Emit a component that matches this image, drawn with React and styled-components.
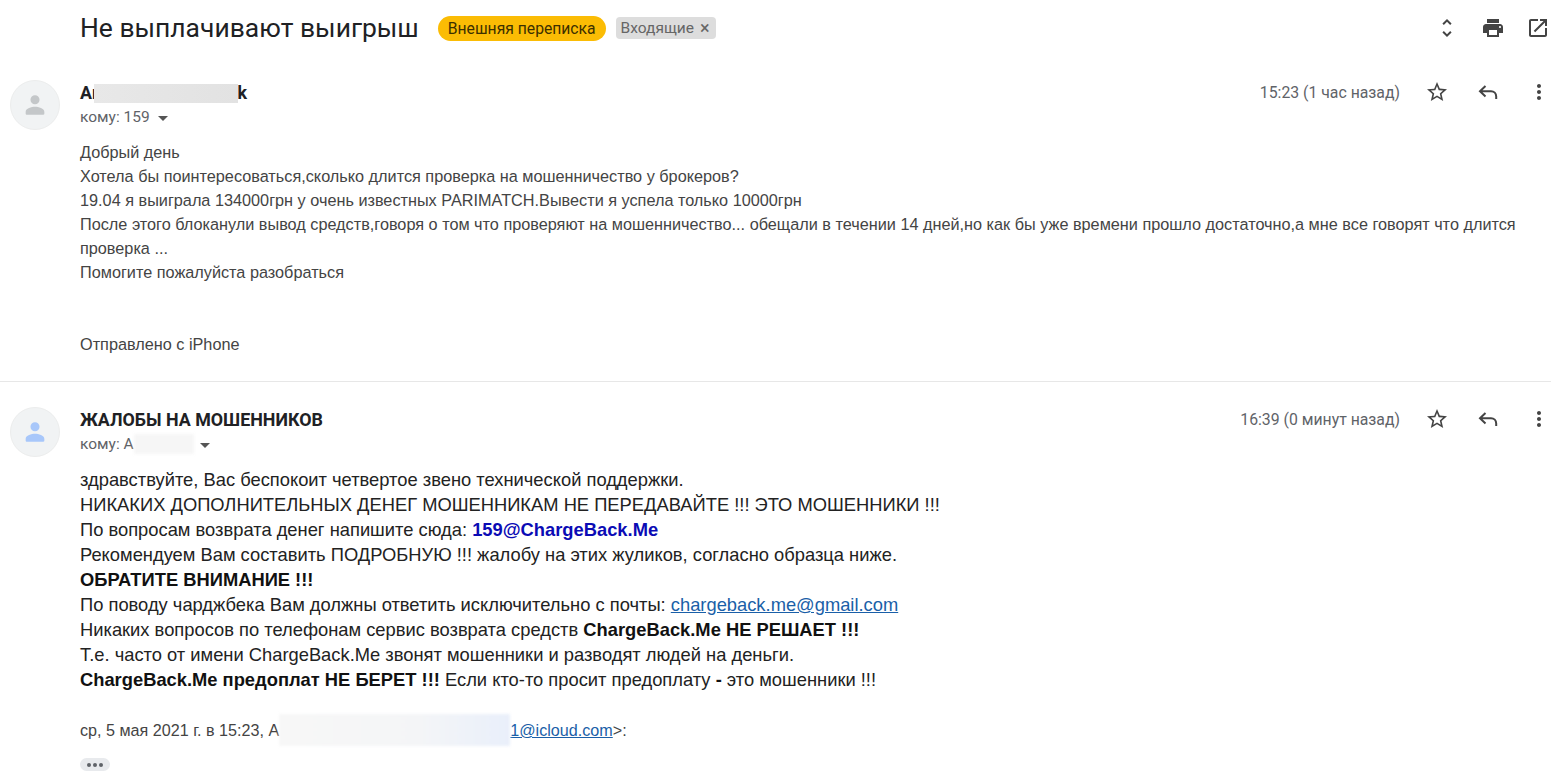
import React from 'react';
import styled, { createGlobalStyle } from 'styled-components';

const GlobalStyle = createGlobalStyle`
  html, body {
    margin: 0;
    background: #fff;
    overflow: hidden;
  }
`;

const Page = styled.div`
  width: 1568px;
  height: 775px;
  overflow: hidden;
  font-family: "Liberation Sans", Arial, sans-serif;
  color: #222;
`;

const SubjectBar = styled.div`
  height: 56px;
  display: flex;
  align-items: center;
  padding: 0 18px 0 80px;
`;

const Subject = styled.h1`
  margin: 0 19px 0 0;
  font: 400 26.45px/32px Roboto, sans-serif;
  color: #202124;
`;

const OrangeLabel = styled.span`
  height: 25px;
  display: flex;
  align-items: center;
  padding: 0 10px;
  margin-right: 10px;
  border-radius: 13px;
  background: #fbbc04;
  color: #3c3000;
  font: 400 15.7px Roboto, sans-serif;
`;

const GreyLabel = styled.span`
  height: 22px;
  display: flex;
  align-items: center;
  gap: 6px;
  padding: 0 6px 0 5px;
  border-radius: 4px;
  background: #dddddd;
  color: #666;
  font: 400 15.5px Roboto, sans-serif;
`;

const Close = styled.span`
  font-size: 18px;
  line-height: 18px;
`;

const ToolIcons = styled.div`
  margin-left: auto;
  display: flex;
  align-items: center;
  gap: 21.5px;
  color: #444;
`;

const Message = styled.div`
  padding: ${p => p.$top}px 17px 0 10px;
  display: grid;
  grid-template-columns: 50px 1fr;
  column-gap: 20px;
`;

const Avatar = styled.div`
  width: 50px;
  height: 50px;
  border-radius: 50%;
  background: #f1f3f4;
  border: 1px solid #eceded;
  box-sizing: border-box;
  display: flex;
  align-items: center;
  justify-content: center;
  color: ${p => p.$color};
`;

const HeadRow = styled.div`
  display: flex;
  align-items: flex-start;
  justify-content: space-between;
`;

const Sender = styled.div`
  font: 700 17.85px/24px Roboto, sans-serif;
  color: #202124;
  display: flex;
  align-items: center;
  margin-top: 1px;
`;

const To = styled.div`
  font: 400 15.5px/24px Roboto, sans-serif;
  color: #5f6368;
  display: flex;
  align-items: center;
`;

const Caret = styled.i`
  width: 0;
  height: 0;
  margin-left: ${p => p.$gap}px;
  margin-top: 2px;
  border-left: 5px solid transparent;
  border-right: 5px solid transparent;
  border-top: 5px solid #555;
`;

const Meta = styled.div`
  display: flex;
  align-items: center;
  color: #444;
  height: 24px;
`;

const Time = styled.span`
  font: 400 15.8px Roboto, sans-serif;
  color: #5f6368;
  margin-right: 25px;
`;

const MetaIcons = styled.div`
  display: flex;
  align-items: center;
  gap: 27px;
`;

const Redact = styled.span`
  display: inline-block;
  flex: none;
  width: ${p => p.$w}px;
  height: ${p => p.$h}px;
  margin-left: ${p => p.$left || 0}px;
  vertical-align: middle;
  background: ${p => p.$bg};
  filter: blur(${p => p.$blur || 1.5}px);
`;

const Body = styled.div`
  font-size: ${p => p.$size}px;
  line-height: ${p => p.$line}px;
  color: ${p => p.$color};
`;

const FirstBody = styled(Body)`
  margin-top: 11px;
`;

const SecondBody = styled(Body)`
  margin-top: 11px;

  b {
    color: #111;
  }
`;

const Gap = styled.div`
  height: ${p => p.$h}px;
`;

const Divider = styled.hr`
  margin: 25px 17px 0 0;
  border: 0;
  border-top: 1px solid #e7e7e7;
`;

const Mail = styled.a`
  color: #1a5fa8;
  text-decoration: underline;
`;

const BlueBold = styled.b`
  && {
    color: #0b0bb5;
  }
`;

const Quote = styled.div`
  font-size: 16.15px;
  line-height: 24px;
  color: #444;
  margin-top: 25px;
  display: flex;
  align-items: center;
  height: 26px;
`;

const Ellipsis = styled.div`
  width: 30px;
  height: 13px;
  margin-top: 15px;
  border-radius: 7px;
  background: #e8eaed;
  display: flex;
  align-items: center;
  justify-content: center;
  gap: 2px;
`;

const Dot = styled.i`
  width: 4px;
  height: 4px;
  border-radius: 50%;
  background: #5f6368;
`;

const Svg = ({ size = 24, children }) => (
  <svg width={size} height={size} viewBox="0 0 24 24" fill="currentColor">{children}</svg>
);

const ExpandIcon = () => (
  <Svg><path d="M12 5.83 15.17 9l1.41-1.41L12 3 7.41 7.59 8.83 9 12 5.83zm0 12.34L8.83 15l-1.41 1.41L12 21l4.59-4.59L15.17 15 12 18.17z" /></Svg>
);
const PrintIcon = () => (
  <Svg><path d="M19 8H5c-1.66 0-3 1.34-3 3v6h4v4h12v-4h4v-6c0-1.66-1.34-3-3-3zm-3 11H8v-5h8v5zm3-7c-.55 0-1-.45-1-1s.45-1 1-1 1 .45 1 1-.45 1-1 1zm-1-9H6v4h12V3z" /></Svg>
);
const OpenIcon = () => (
  <Svg><path d="M19 19H5V5h7V3H5c-1.11 0-2 .9-2 2v14c0 1.1.89 2 2 2h14c1.1 0 2-.9 2-2v-7h-2v7zM14 3v2h3.59l-9.83 9.83 1.41 1.41L19 6.41V10h2V3h-7z" /></Svg>
);
const StarIcon = () => (
  <Svg><path d="M22 9.24l-7.19-.62L12 2 9.19 8.63 2 9.24l5.46 4.73L5.82 21 12 17.27 18.18 21l-1.63-7.03L22 9.24zM12 15.4l-3.76 2.27 1-4.28-3.32-2.88 4.38-.38L12 6.1l1.71 4.04 4.38.38-3.32 2.88 1 4.28L12 15.4z" /></Svg>
);
const ReplyIcon = () => (
  <Svg><path d="M9.5 6 4 11.2l5.5 5.2M4.5 11.2H15c3 0 5.2 2.3 5.2 5.3V19" fill="none" stroke="currentColor" strokeWidth="2" /></Svg>
);
const MoreIcon = () => (
  <Svg><path d="M12 8c1.1 0 2-.9 2-2s-.9-2-2-2-2 .9-2 2 .9 2 2 2zm0 2c-1.1 0-2 .9-2 2s.9 2 2 2 2-.9 2-2-.9-2-2-2zm0 6c-1.1 0-2 .9-2 2s.9 2 2 2 2-.9 2-2-.9-2-2-2z" /></Svg>
);
const PersonIcon = () => (
  <Svg size={32}><path d="M12 11.5a3.4 3.4 0 1 0 0-6.8 3.4 3.4 0 0 0 0 6.8zm0 1.9c-2.6 0-7 1.2-7 3.6v1.6c0 .4.3.7.7.7h12.6c.4 0 .7-.3.7-.7V17c0-2.4-4.4-3.6-7-3.6z" /></Svg>
);

const HeadActions = ({ time }) => (
  <Meta>
    <Time>{time}</Time>
    <MetaIcons>
      <StarIcon />
      <ReplyIcon />
      <MoreIcon />
    </MetaIcons>
  </Meta>
);

export default function App() {
  return (
    <Page>
      <GlobalStyle />
      <SubjectBar>
        <Subject>Не выплачивают выигрыш</Subject>
        <OrangeLabel>Внешняя переписка</OrangeLabel>
        <GreyLabel>Входящие <Close>×</Close></GreyLabel>
        <ToolIcons>
          <ExpandIcon />
          <PrintIcon />
          <OpenIcon />
        </ToolIcons>
      </SubjectBar>

      <Message $top={24}>
        <Avatar $color="#c4c7c9"><PersonIcon /></Avatar>
        <div>
          <HeadRow>
            <div>
              <Sender>Ar<Redact $left={-5} $w={144} $h={19} $blur={0.5} $bg="linear-gradient(90deg, #e8e8e8, #e2e2e2)" />k</Sender>
              <To>кому: 159<Caret $gap={8} /></To>
            </div>
            <HeadActions time="15:23 (1 час назад)" />
          </HeadRow>
          <FirstBody $size={16.25} $line={24} $color="#444">
            Добрый день<br />
            Хотела бы поинтересоваться,сколько длится проверка на мошенничество у брокеров?<br />
            19.04 я выиграла 134000грн у очень известных PARIMATCH.Вывести я успела только 10000грн<br />
            После этого блоканули вывод средств,говоря о том что проверяют на мошенничество... обещали в течении 14 дней,но как бы уже времени прошло достаточно,а мне все говорят что длится проверка ...<br />
            Помогите пожалуйста разобраться
            <Gap $h={48} />
            Отправлено с iPhone
          </FirstBody>
        </div>
      </Message>
      <Divider />

      <Message $top={25}>
        <Avatar $color="#a8c7fa"><PersonIcon /></Avatar>
        <div>
          <HeadRow>
            <div>
              <Sender>ЖАЛОБЫ НА МОШЕННИКОВ</Sender>
              <To>кому: A<Redact $w={60} $h={20} $bg="#f6f6f6" /><Caret $gap={6} /></To>
            </div>
            <HeadActions time="16:39 (0 минут назад)" />
          </HeadRow>
          <SecondBody $size={18.33} $line={25} $color="#222">
            здравствуйте, Вас беспокоит четвертое звено технической поддержки.<br />
            НИКАКИХ ДОПОЛНИТЕЛЬНЫХ ДЕНЕГ МОШЕННИКАМ НЕ ПЕРЕДАВАЙТЕ !!! ЭТО МОШЕННИКИ !!!<br />
            По вопросам возврата денег напишите сюда: <BlueBold>159@ChargeBack.Me</BlueBold><br />
            Рекомендуем Вам составить ПОДРОБНУЮ !!! жалобу на этих жуликов, согласно образца ниже.<br />
            <b>ОБРАТИТЕ ВНИМАНИЕ !!!</b><br />
            По поводу чарджбека Вам должны ответить исключительно с почты: <Mail>chargeback.me@gmail.com</Mail><br />
            Никаких вопросов по телефонам сервис возврата средств <b>ChargeBack.Me НЕ РЕШАЕТ !!!</b><br />
            Т.е. часто от имени ChargeBack.Me звонят мошенники и разводят людей на деньги.<br />
            <b>ChargeBack.Me предоплат НЕ БЕРЕТ !!!</b> Если кто-то просит предоплату <b>-</b> это мошенники !!!
          </SecondBody>
          <Quote>
            ср, 5 мая 2021 г. в 15:23, A<Redact $w={231} $h={32} $bg="linear-gradient(90deg, #f7f7f7, #f4f5f7 60%, #e9effa)" /><Mail>1@icloud.com</Mail>&gt;:
          </Quote>
          <Ellipsis><Dot /><Dot /><Dot /></Ellipsis>
        </div>
      </Message>
    </Page>
  );
}
